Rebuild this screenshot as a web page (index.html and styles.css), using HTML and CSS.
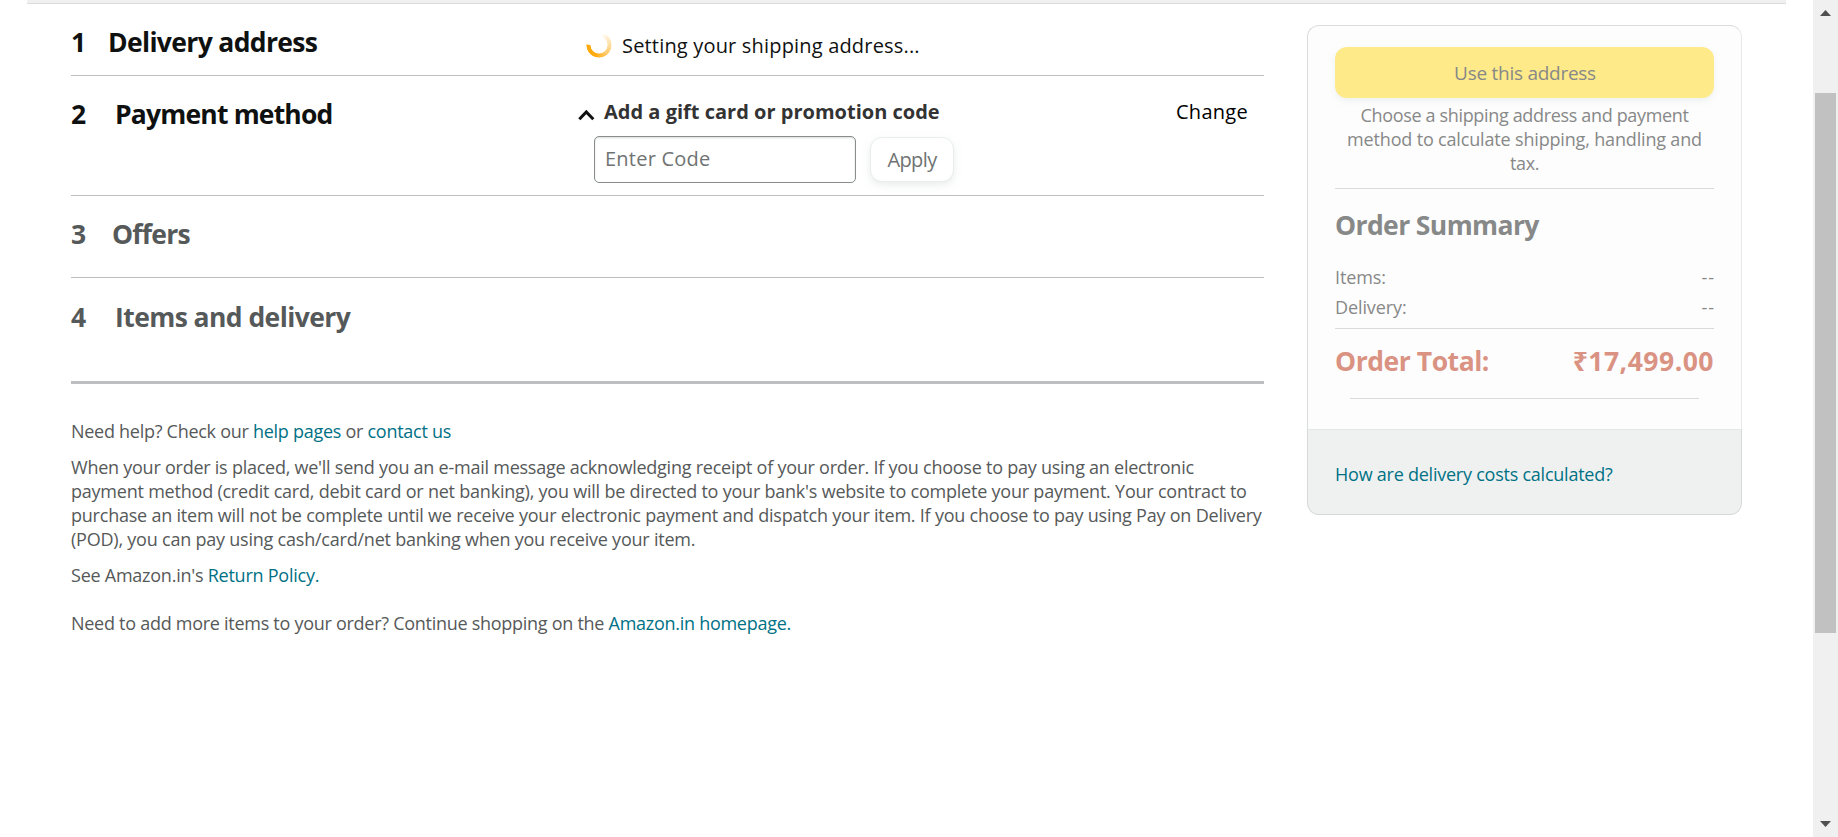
FILE: index.html
```html
<!DOCTYPE html>
<html lang="en">
<head>
<meta charset="utf-8">
<title>Checkout</title>
<link rel="stylesheet" href="styles.css">
</head>
<body>
<div class="page">
  <div class="header-edge"></div>
  <div class="checkout">
    <main class="main">
      <section class="step step-address">
        <h2 class="step-title"><span class="num">1</span><span class="t-address">Delivery address</span></h2>
        <div class="status"><span class="spinner"></span><span>Setting your shipping address...</span></div>
      </section>
      <section class="step step-payment">
        <h2 class="step-title"><span class="num">2</span><span class="t-payment">Payment method</span></h2>
        <div class="promo">
          <div class="promo-head">
            <svg class="chevron" width="17" height="12" viewBox="0 0 17 12"><path d="M1.3 10.2 8.3 3 15.3 10.2" fill="none" stroke="#111" stroke-width="3"/></svg>
            <span>Add a gift card or promotion code</span>
          </div>
          <div class="promo-form">
            <input class="code" type="text" placeholder="Enter Code">
            <button class="apply" type="button">Apply</button>
          </div>
        </div>
        <a class="change">Change</a>
      </section>
      <section class="step step-offers">
        <h2 class="step-title"><span class="num">3</span><span class="t-offers">Offers</span></h2>
      </section>
      <section class="step step-items">
        <h2 class="step-title"><span class="num">4</span><span class="t-items">Items and delivery</span></h2>
      </section>
      <div class="help">
        <p class="contact">Need help? Check our <a>help pages</a> or <a>contact us</a></p>
        <p>When your order is placed, we'll send you an e-mail message acknowledging receipt of your order. If you choose to pay using an electronic<br><span class="wide">payment method (credit card, debit card or net banking), you will be directed to your bank's website to complete your payment. Your contract to<br>purchase an item will not be complete until we receive your electronic payment and dispatch your item. If you choose to pay using Pay on Delivery<br>(POD), you can pay using cash/card/net banking when you receive your item.</span></p>
        <p>See Amazon.in's <a>Return Policy.</a></p>
        <p class="more">Need to add more items to your order? Continue shopping on the <a>Amazon.in homepage.</a></p>
      </div>
    </main>
    <aside class="card">
      <div class="card-body">
        <button class="use" type="button">Use this address</button>
        <p class="hint">Choose a shipping address and payment<br><span class="hint-wide">method to calculate shipping, handling and</span><br>tax.</p>
        <hr class="rule">
        <h3 class="summary">Order Summary</h3>
        <div class="line"><span>Items:</span><span class="dash">--</span></div>
        <div class="line"><span>Delivery:</span><span class="dash">--</span></div>
        <hr class="rule">
        <div class="total"><span>Order Total:</span><span class="amount">₹17,499.00</span></div>
        <hr class="rule rule-inset">
      </div>
      <div class="card-foot"><a>How are delivery costs calculated?</a></div>
    </aside>
  </div>
</div>
<div class="scrollbar">
  <svg class="arrow" width="11" height="6" viewBox="0 0 11 6"><path d="M0 6 5.5 0 11 6z" fill="#505050"/></svg>
  <div class="thumb"></div>
  <svg class="arrow arrow-down" width="11" height="6" viewBox="0 0 11 6"><path d="M0 0 5.5 6 11 0z" fill="#505050"/></svg>
</div>
</body>
</html>
```

FILE: styles.css
```css
* { box-sizing: border-box; }
body {
  margin: 0;
  height: 837px;
  display: flex;
  overflow: hidden;
  background: #fff;
  color: #0f1111;
  font: 18px/24px "Open Sans", "Noto Sans", sans-serif;
  white-space: nowrap;
}
h2, h3, p { margin: 0; font-weight: 700; }
p { font-weight: 400; }
a { color: #007185; }
button, input { font-family: inherit; }

.page { flex: 1; }
.header-edge {
  height: 4px;
  margin: 0 27px;
  background: #f0f0f0;
  border-bottom: 1px solid #dcdcdc;
}
.checkout {
  display: flex;
  align-items: flex-start;
  gap: 43px;
  padding-left: 71px;
}
.main { width: 1193px; }

/* Steps */
.step {
  display: grid;
  grid-template-columns: 507px 1fr auto;
  align-items: start;
  border-bottom: 1px solid #bbbfbf;
}
.step-address { height: 72px; }
.step-payment { height: 120px; }
.step-offers { height: 82px; color: #565959; }
.step-items { height: 106px; border-bottom-width: 3px; color: #565959; }
.step-title {
  display: flex;
  padding-top: 20px;
  font-size: 26.5px;
  line-height: 36px;
}
.step-items .step-title { padding-top: 21px; }
.num { width: 37px; }
.t-address { letter-spacing: -0.65px; }
.t-payment { margin-left: 7px; letter-spacing: -0.82px; }
.t-offers { margin-left: 4px; letter-spacing: -0.75px; }
.t-items { margin-left: 7px; letter-spacing: -0.57px; }

.status {
  display: flex;
  padding: 28px 0 0 8px;
  font-size: 20px;
  line-height: 28px;
  letter-spacing: 0.18px;
}
.spinner {
  width: 26px;
  height: 26px;
  margin-right: 10px;
  border-radius: 50%;
  background: conic-gradient(rgba(255, 170, 15, 0) 15deg, rgba(255, 170, 15, .3) 70deg, rgba(255, 170, 15, .6) 135deg, #ffab0f 200deg, #ffa90a 272deg, rgba(255, 170, 15, 0) 273deg);
  -webkit-mask: radial-gradient(circle, transparent 8.2px, #000 8.8px, #000 12.2px, transparent 12.9px);
  mask: radial-gradient(circle, transparent 8.2px, #000 8.8px, #000 12.2px, transparent 12.9px);
}

.promo { padding-top: 22px; }
.promo-head {
  display: flex;
  color: #333;
  font-size: 20px;
  font-weight: 700;
  line-height: 28px;
  letter-spacing: 0.01px;
}
.chevron { margin: 11px 9px 0 0; }
.promo-form {
  display: flex;
  gap: 14px;
  margin: 10px 0 0 16px;
}
.code {
  width: 262px;
  height: 47px;
  padding: 0 10px 2px;
  border: 1px solid #888c8c;
  border-radius: 5px;
  box-shadow: inset 0 1px 2px rgba(15, 17, 17, .15);
  font-size: 20px;
  letter-spacing: 0.225px;
}
.code::placeholder { color: #6f7373; }
.apply {
  width: 84px;
  height: 45px;
  margin-top: 1px;
  padding: 0 0 1px;
  border: 1px solid #eaeded;
  border-radius: 12px;
  background: #fff;
  box-shadow: 0 3px 7px rgba(213, 217, 217, .5);
  color: #6f7373;
  font-size: 20px;
  letter-spacing: -0.6px;
}
.change {
  padding: 22px 16px 0 0;
  color: #000;
  font-size: 20px;
  line-height: 28px;
  letter-spacing: 0.28px;
}

/* Help text */
.help {
  padding-top: 35px;
  color: #565959;
  letter-spacing: -0.245px;
}
.help p { margin-bottom: 12px; }
.help .contact { letter-spacing: -0.275px; }
.wide { letter-spacing: -0.22px; }
.help .more { margin-top: 24px; letter-spacing: -0.276px; }

/* Order summary card */
.card {
  width: 435px;
  height: 490px;
  margin-top: 21px;
}
.card-body {
  height: 404px;
  padding: 21px 27px 0;
  border: 1px solid #d9dcdc;
  border-right-color: #e8eaea;
  border-bottom: 0;
  border-radius: 12px 12px 0 0;
  background: #fdfdfd;
  color: #878888;
  letter-spacing: -0.1px;
}
.use {
  display: block;
  width: 100%;
  height: 51px;
  padding: 0 0 0 1px;
  border: 0;
  border-radius: 12px;
  background: #feea89;
  box-shadow: 0 3px 7px rgba(213, 217, 217, .35);
  color: #878888;
  font-size: 19px;
  letter-spacing: -0.268px;
}
.hint { margin-top: 5px; text-align: center; letter-spacing: -0.339px; }
.hint-wide { letter-spacing: -0.166px; }
.rule {
  height: 1px;
  margin: 13px 0 0;
  border: 0;
  background: #dadcdc;
}
.summary {
  margin: 18px 0 22px;
  font-size: 26.5px;
  line-height: 36px;
  letter-spacing: -0.6px;
}
.line { display: flex; justify-content: space-between; }
.line + .line { margin-top: 6px; }
.line + .rule { margin-top: 9px; }
.dash { letter-spacing: 1px; margin-right: -1px; }
.total {
  display: flex;
  justify-content: space-between;
  margin-top: 14px;
  color: #da9383;
  font-size: 26.5px;
  font-weight: 700;
  line-height: 36px;
  letter-spacing: -0.45px;
}
.amount { letter-spacing: 0.5px; }
.rule-inset { margin: 19px 15px 0; }
.card-foot {
  height: 86px;
  padding: 32px 27px 0;
  border: 1px solid #d5d9d9;
  border-top-color: #e4e7e7;
  border-radius: 0 0 12px 12px;
  background: #eff1f1;
  letter-spacing: -0.237px;
}

/* Window scrollbar */
.scrollbar {
  width: 25px;
  padding: 10px 2px;
  display: flex;
  flex-direction: column;
  background: #f0f0f0;
}
.arrow { margin-left: 5px; }
.arrow-down { margin-top: auto; }
.thumb {
  height: 540px;
  margin-top: 77px;
  background: #c1c1c1;
}
```
